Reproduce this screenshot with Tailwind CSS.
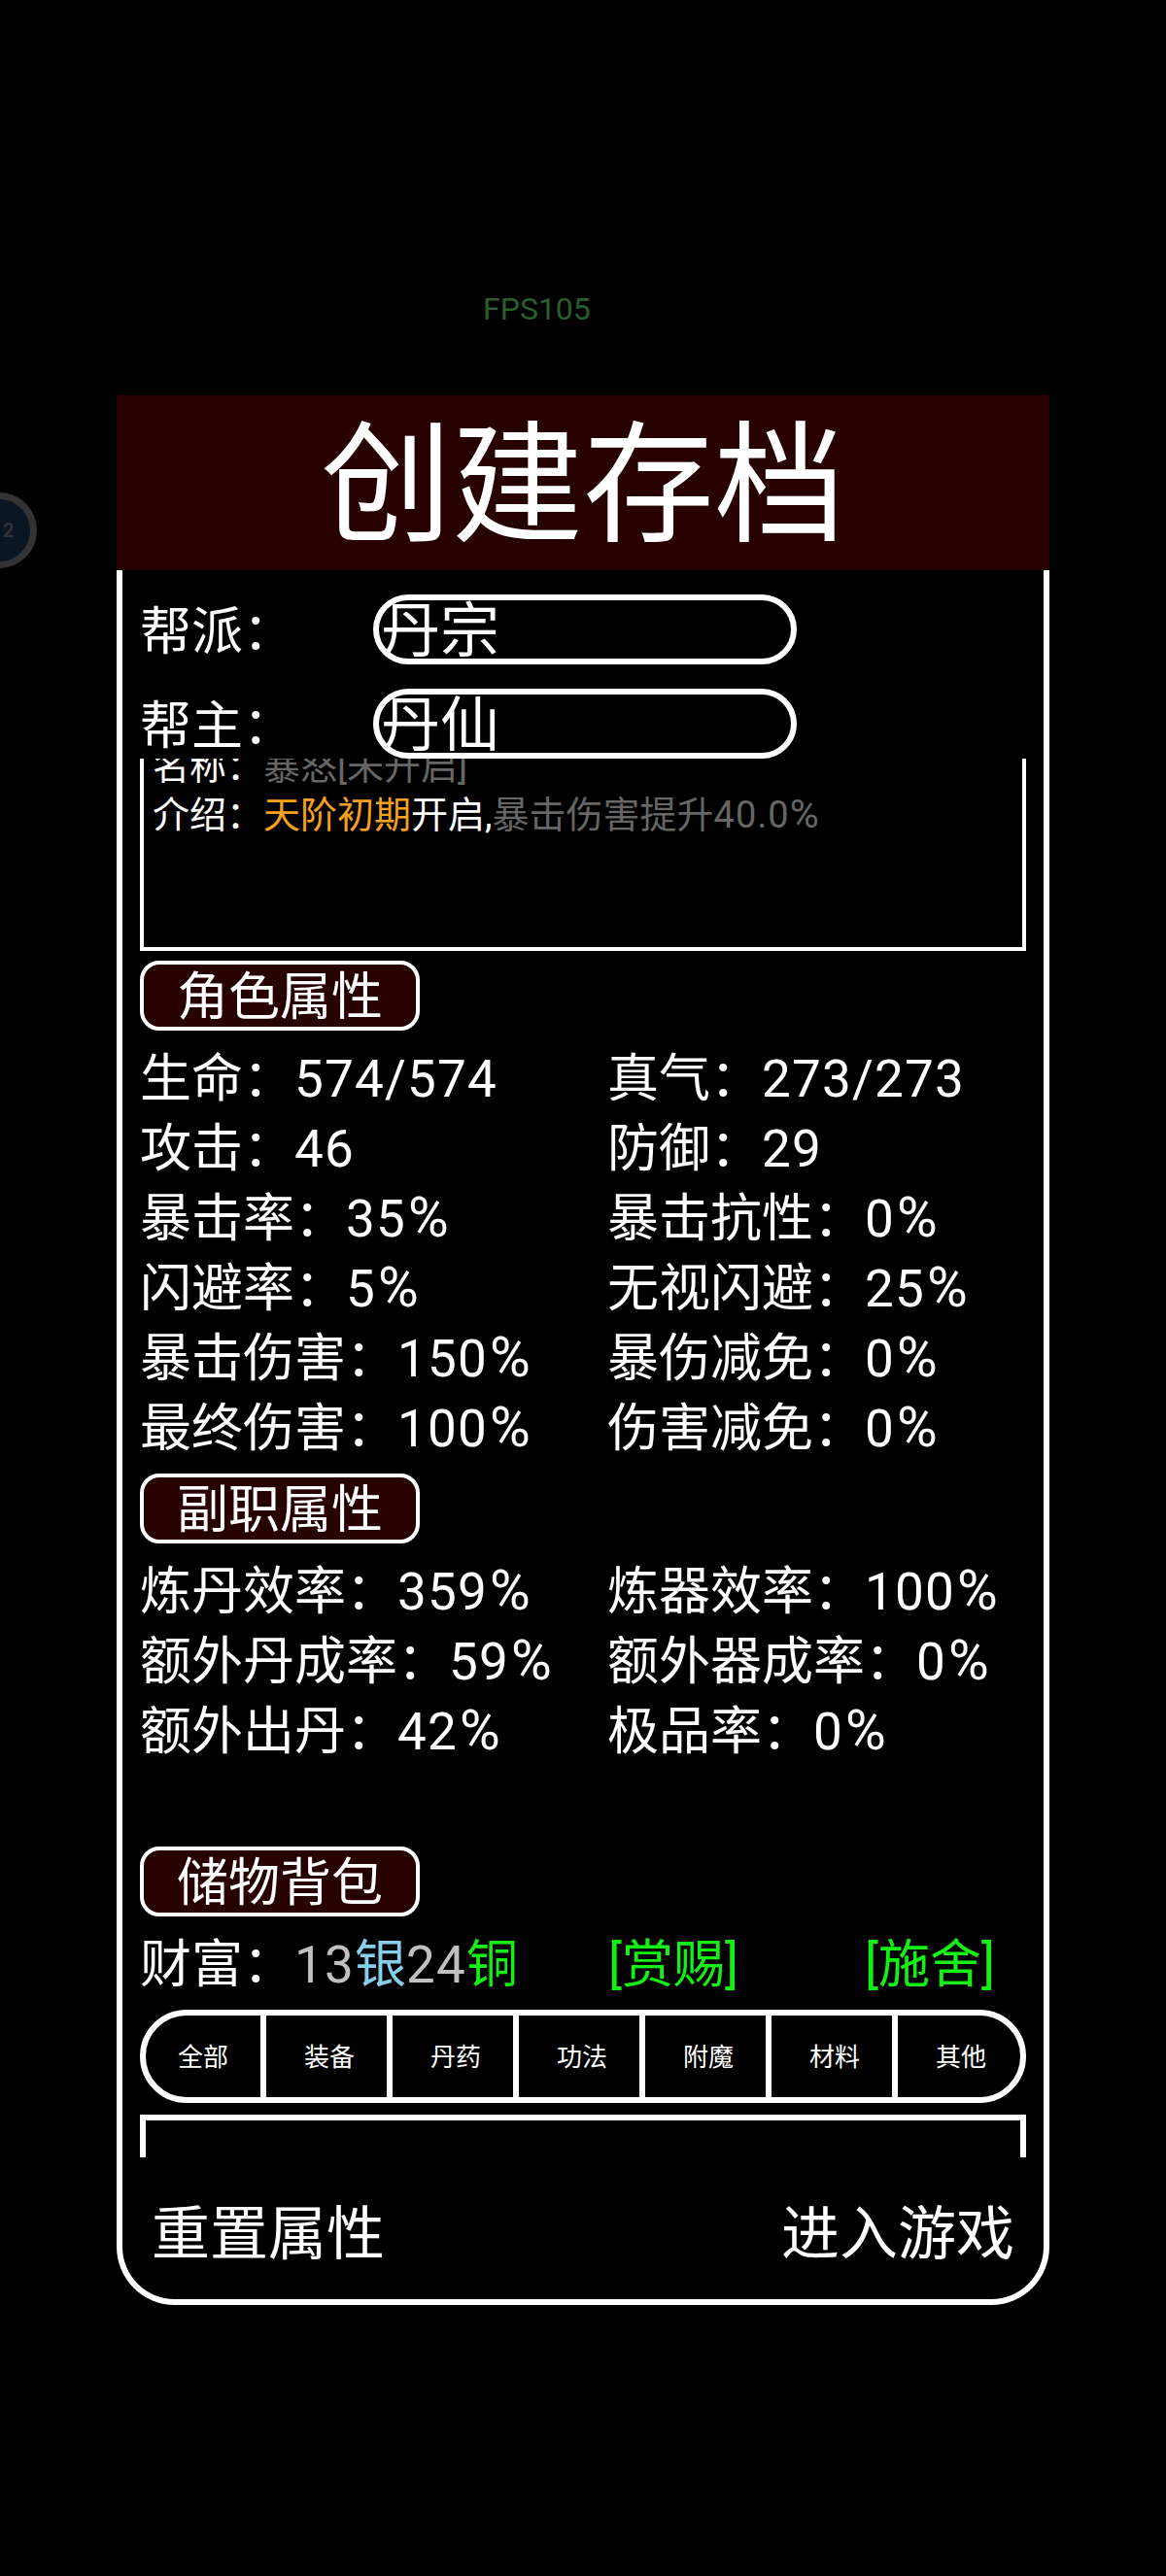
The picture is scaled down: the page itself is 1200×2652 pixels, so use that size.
<!DOCTYPE html>
<html lang="zh">
<head>
<meta charset="utf-8">
<script src="https://cdn.jsdelivr.net/npm/@tailwindcss/browser@4"></script>
</head>
<body class="bg-black">
<div class="relative h-[2652px] w-[1200px] overflow-hidden bg-black text-white font-['Roboto','Noto_Sans_CJK_SC',sans-serif]">
  <div class="absolute left-[497px] top-[300px] text-[32px] leading-[36px] text-[#285f2d]">FPS105</div>
  <div class="absolute left-[-40px] top-[507px] flex h-[78px] w-[78px] items-center justify-center rounded-full border-[7px] border-[#333333] bg-[#0a1622] pl-[8px] text-[20px] font-bold tracking-[5px] text-[#333333]">22</div>

  <div class="pt-[407px] pl-[120px]">
    <div class="w-[960px]">
      <div class="flex h-[180px] items-center justify-center bg-[#270000] pt-[8px] text-[135px] leading-[172px]">创建存档</div>
      <div class="h-[1786px] rounded-b-[60px] border-x-[6px] border-b-[6px] border-white px-[18px] pt-[25px]">
        <div class="flex h-[72px] items-center">
          <div class="w-[240px] pt-[5px] text-[53px] leading-[72px]">帮派：</div>
          <div class="h-[72px] w-[436px] rounded-full border-[6px] border-white pl-[2px] text-[61px] leading-[64px]">丹宗</div>
        </div>
        <div class="mt-[25px] flex h-[72px] items-center">
          <div class="w-[240px] pt-[5px] text-[53px] leading-[72px]">帮主：</div>
          <div class="h-[72px] w-[436px] rounded-full border-[6px] border-white pl-[2px] text-[61px] leading-[64px]">丹仙</div>
        </div>
        <div class="h-[198px] overflow-hidden border-x-[4px] border-b-[4px] border-white pl-[9px] text-[38px] leading-[50px]">
          <div class="-mt-[17px]">名称：<span class="text-[#666666]">暴怒[未开启]</span></div>
          <div>介绍：<span class="text-[#f7a01e]">天阶初期</span>开启,<span class="text-[#666666]">暴击伤害提升<span class="tracking-[1px]">40.0</span><span class="text-[41px] leading-[0]">%</span></span></div>
        </div>

        <div class="mt-[10px] flex h-[72px] w-[288px] items-center justify-center rounded-[20px] border-[4px] border-white bg-[#270000] pt-[4px] text-[53px] leading-[62px]">角色属性</div>
        <div class="mt-[14px] grid grid-cols-[481px_1fr] text-[53px] leading-[72px]">
          <div>生命：<span class="tracking-[1.2px]">574/574</span></div><div>真气：<span class="tracking-[1.2px]">273/273</span></div>
          <div>攻击：<span class="tracking-[1.2px]">46</span></div><div>防御：<span class="tracking-[1.2px]">29</span></div>
          <div>暴击率：<span class="tracking-[1.2px]">35</span><span class="pl-[2px] text-[57px] leading-[0]">%</span></div><div>暴击抗性：<span class="tracking-[1.2px]">0</span><span class="pl-[2px] text-[57px] leading-[0]">%</span></div>
          <div>闪避率：<span class="tracking-[1.2px]">5</span><span class="pl-[2px] text-[57px] leading-[0]">%</span></div><div>无视闪避：<span class="tracking-[1.2px]">25</span><span class="pl-[2px] text-[57px] leading-[0]">%</span></div>
          <div>暴击伤害：<span class="tracking-[1.2px]">150</span><span class="pl-[2px] text-[57px] leading-[0]">%</span></div><div>暴伤减免：<span class="tracking-[1.2px]">0</span><span class="pl-[2px] text-[57px] leading-[0]">%</span></div>
          <div>最终伤害：<span class="tracking-[1.2px]">100</span><span class="pl-[2px] text-[57px] leading-[0]">%</span></div><div>伤害减免：<span class="tracking-[1.2px]">0</span><span class="pl-[2px] text-[57px] leading-[0]">%</span></div>
        </div>

        <div class="mt-[10px] flex h-[72px] w-[288px] items-center justify-center rounded-[20px] border-[4px] border-white bg-[#270000] pt-[4px] text-[53px] leading-[62px]">副职属性</div>
        <div class="mt-[14px] grid grid-cols-[481px_1fr] text-[53px] leading-[72px]">
          <div>炼丹效率：<span class="tracking-[1.2px]">359</span><span class="pl-[2px] text-[57px] leading-[0]">%</span></div><div>炼器效率：<span class="tracking-[1.2px]">100</span><span class="pl-[2px] text-[57px] leading-[0]">%</span></div>
          <div>额外丹成率：<span class="tracking-[1.2px]">59</span><span class="pl-[2px] text-[57px] leading-[0]">%</span></div><div>额外器成率：<span class="tracking-[1.2px]">0</span><span class="pl-[2px] text-[57px] leading-[0]">%</span></div>
          <div>额外出丹：<span class="tracking-[1.2px]">42</span><span class="pl-[2px] text-[57px] leading-[0]">%</span></div><div>极品率：<span class="tracking-[1.2px]">0</span><span class="pl-[2px] text-[57px] leading-[0]">%</span></div>
        </div>

        <div class="mt-[82px] flex h-[72px] w-[288px] items-center justify-center rounded-[20px] border-[4px] border-white bg-[#270000] pt-[4px] text-[53px] leading-[62px]">储物背包</div>
        <div class="mt-[14px] grid grid-cols-[482px_264px_1fr] text-[53px] leading-[72px]">
          <div>财富：<span class="tracking-[1.2px] text-[#c0c0c0]">13</span><span class="text-[#87ceeb]">银</span><span class="tracking-[1.2px] text-[#c0c0c0]">24</span><span class="text-[#14f014]">铜</span></div>
          <div class="text-[#14f014]">[赏赐]</div>
          <div class="text-[#14f014]">[施舍]</div>
        </div>

        <div class="mt-[10px] h-[96px] w-[912px] rounded-full border-[6px] border-white">
          <div class="-m-[6px] flex h-[96px] text-[26px]">
            <div class="flex w-[130px] items-center justify-center border-r-[6px] border-white pl-[6px] pt-[2px]">全部</div>
            <div class="flex w-[130px] items-center justify-center border-r-[6px] border-white pl-[6px] pt-[2px]">装备</div>
            <div class="flex w-[130px] items-center justify-center border-r-[6px] border-white pl-[6px] pt-[2px]">丹药</div>
            <div class="flex w-[130px] items-center justify-center border-r-[6px] border-white pl-[6px] pt-[2px]">功法</div>
            <div class="flex w-[130px] items-center justify-center border-r-[6px] border-white pl-[6px] pt-[2px]">附魔</div>
            <div class="flex w-[130px] items-center justify-center border-r-[6px] border-white pl-[6px] pt-[2px]">材料</div>
            <div class="flex w-[130px] items-center justify-center pt-[2px]">其他</div>
          </div>
        </div>

        <div class="mt-[12px] h-[44px] border-x-[6px] border-t-[6px] border-white"></div>
        <div class="flex h-[146px] items-center justify-between pl-[12px] pr-[12px] text-[60px]">
          <div class="pt-[14px]">重置属性</div>
          <div class="pt-[14px]">进入游戏</div>
        </div>
      </div>
    </div>
  </div>
</div>
</body>
</html>
